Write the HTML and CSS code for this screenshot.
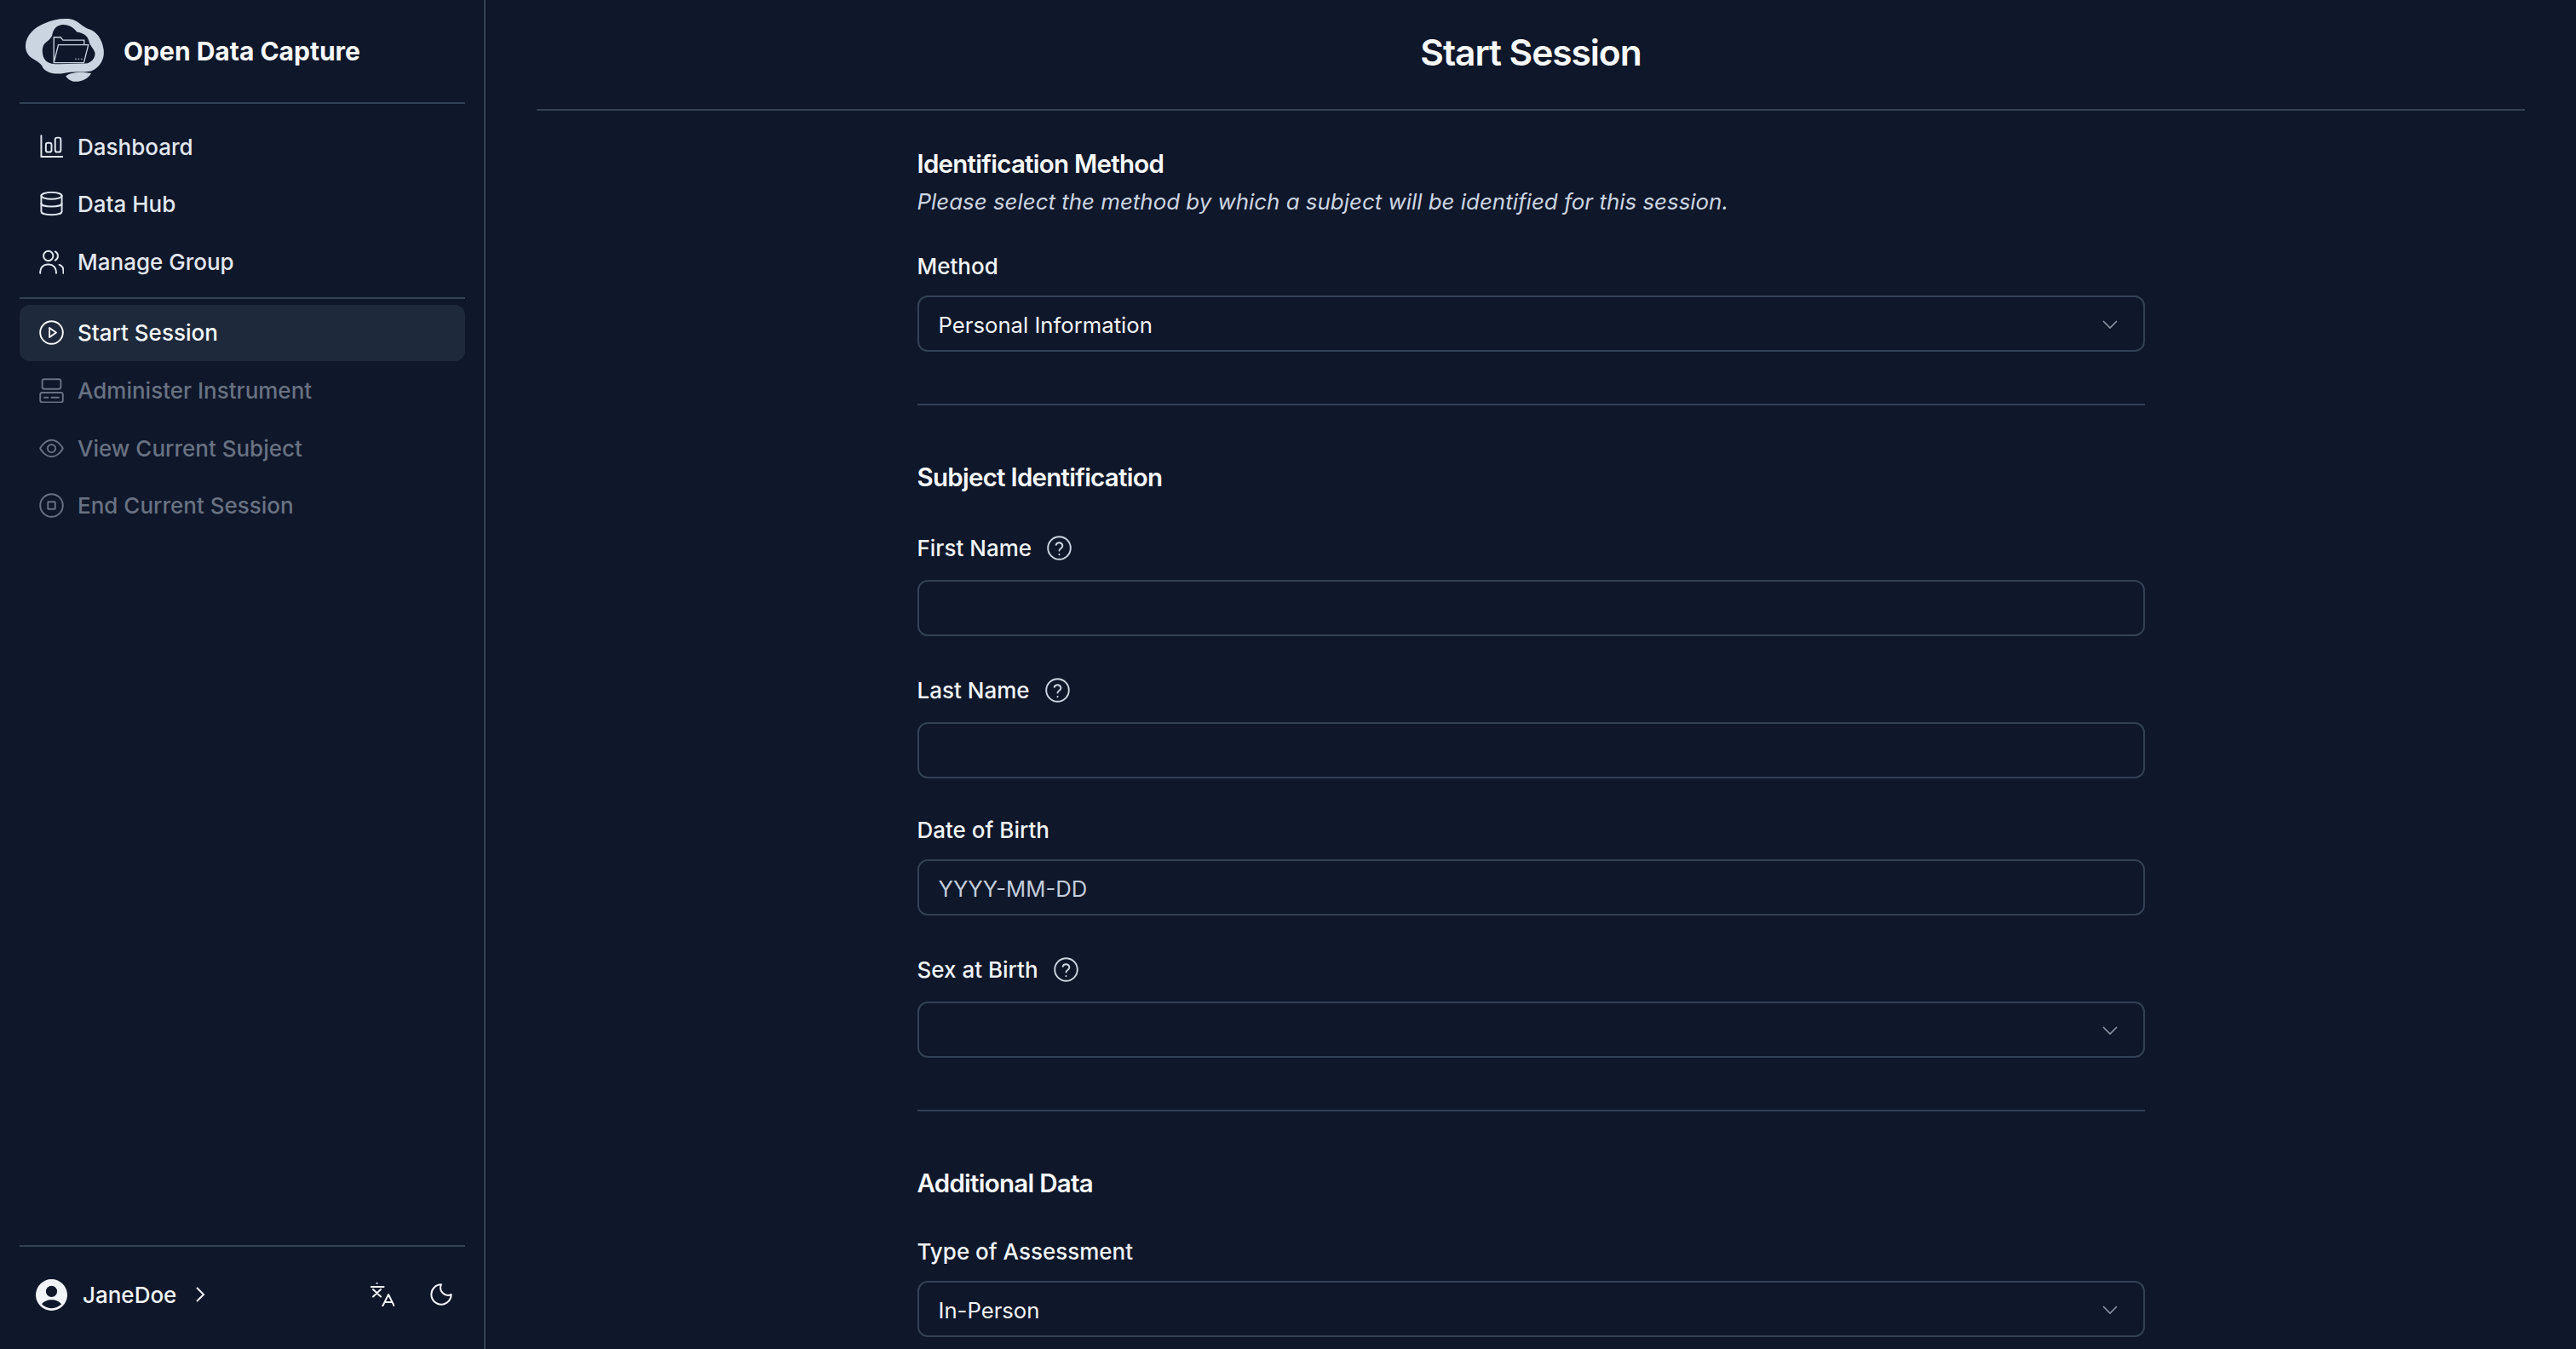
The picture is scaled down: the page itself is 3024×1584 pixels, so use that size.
FILE: index.html
```html
<!DOCTYPE html>
<html lang="en">
<head>
  <meta charset="UTF-8" />
  <title>Open Data Capture</title>
  <link rel="stylesheet" href="styles.css">
</head>
<body>
  <div class="app">
    <aside class="sidebar">
      <div class="brand">
        <svg class="brand-logo" viewBox="30 38 280 228">
          <path class="logo-fill" fill-rule="evenodd" d="M30 135C32 100 60 72 95 58C125 44 160 38 190 42C215 46 230 68 250 76C280 84 300 110 306 150C310 180 296 210 262 226C230 232 200 226 165 233C135 238 105 232 92 215C88 200 70 190 50 178C36 168 29 152 30 135ZM125 95C122 112 108 118 96 130C86 145 88 175 100 187C112 200 130 201 150 201L245 199C265 195 278 178 275 160C270 145 256 135 254 120C250 100 232 90 212 88C200 72 182 60 160 62C140 64 128 78 125 95Z"/>
          <path class="logo-fill" d="M172 243C185 232 215 226 262 233C255 248 235 262 205 263C190 262 178 254 172 243Z"/>
          <path class="logo-line" d="M130 196V106H154L162 116H237V132M130 196L146 133H252L236 196Z"/>
          <path class="logo-dots" d="M206 183h3M216 183h3M227 183h3"/>
        </svg>
        <span class="brand-name">Open Data Capture</span>
      </div>
      <hr class="rule">
      <nav class="nav nav-top">
        <a class="nav-item">
          <svg class="icon" viewBox="0 0 24 24"><path d="M2 1v20.500h20.500"/><rect x="6.500" y="8" width="5.500" height="9" rx="2"/><rect x="15.500" y="3" width="5.500" height="14" rx="2"/></svg>
          Dashboard
        </a>
        <a class="nav-item">
          <svg class="icon" viewBox="0 0 24 24"><ellipse cx="12" cy="4" rx="10" ry="3.300"/><path d="M2 4v15.500c0 1.800 4.500 3 10 3s10-1.200 10-3V4"/><path d="M2 11.500c0 1.800 4.500 3 10 3s10-1.200 10-3"/></svg>
          Data Hub
        </a>
        <a class="nav-item">
          <svg class="icon" viewBox="0 0 24 24"><circle cx="8.900" cy="6.200" r="4.700"/><path d="M1 23v-1.500a7 7 0 0 1 7-7h1.500a7 7 0 0 1 7 7V23"/><path d="M15.500 2a4.700 4.700 0 0 1 0 8.500"/><path d="M19.500 14.800a6 6 0 0 1 4 5.700V23"/></svg>
          Manage Group
        </a>
      </nav>
      <hr class="rule rule-mid">
      <nav class="nav">
        <a class="nav-item nav-item-active">
          <svg class="icon" viewBox="0 0 24 24"><circle cx="12" cy="12" r="11"/><path d="M10 7.500l6.500 4.500-6.500 4.500z"/></svg>
          Start Session
        </a>
        <a class="nav-item nav-item-off">
          <svg class="icon" viewBox="0 0 24 24"><rect x="3" y="1" width="18" height="9.500" rx="2"/><rect x="1" y="14" width="22" height="9.500" rx="2"/><path d="M5 18.800h3.500M12 18.800h7"/></svg>
          Administer Instrument
        </a>
        <a class="nav-item nav-item-off">
          <svg class="icon" viewBox="0 0 24 24"><path d="M1 12s4-8 11-8 11 8 11 8-4 8-11 8-11-8-11-8z"/><circle cx="12" cy="12" r="3.800"/></svg>
          View Current Subject
        </a>
        <a class="nav-item nav-item-off">
          <svg class="icon" viewBox="0 0 24 24"><circle cx="12" cy="12" r="11"/><rect x="8.500" y="8.500" width="7" height="7" rx="0.500"/></svg>
          End Current Session
        </a>
      </nav>
      <div class="sidebar-foot">
        <hr class="rule">
        <div class="user-bar">
          <svg class="avatar" viewBox="0 0 24 24"><path fill-rule="evenodd" d="M12 0a12 12 0 1 0 0 24a12 12 0 0 0 0-24zM12 5a4.300 4.300 0 1 1 0 8.600a4.300 4.300 0 0 1 0-8.600zM4.500 19c1.500-2 4.300-3.300 7.500-3.300s6 1.300 7.500 3.300c-1.900 2-4.500 3.200-7.500 3.200s-5.600-1.200-7.500-3.200z"/></svg>
          <span class="user-name">JaneDoe</span>
          <svg class="user-chevron" viewBox="0 0 12 18"><path d="M2 1l8 8-8 8"/></svg>
          <svg class="foot-icon foot-lang" viewBox="0 0 28 28"><path d="M0.500 5h15M7.500 0.500v.2M3 8l9 8.500M12 8l-9 8.500"/><path d="M14 28l7-14 7 14M16.500 23h9"/></svg>
          <svg class="foot-icon foot-moon" viewBox="0 0 24 24"><path d="M12 2a7.500 7.500 0 0 0 10 10 10 10 0 1 1-10-10z"/></svg>
        </div>
      </div>
    </aside>

    <main class="main">
      <header class="page-head">
        <h1>Start Session</h1>
      </header>
      <form class="form">
        <section class="form-section">
          <h2>Identification Method</h2>
          <p class="hint">Please select the method by which a subject will be identified for this session.</p>
          <div class="field">
            <label>Method</label>
            <div class="box">Personal Information
              <svg class="chevron" viewBox="0 0 18 10"><path d="M1 1l8 8 8-8"/></svg>
            </div>
          </div>
        </section>
        <hr class="rule form-rule">
        <section class="form-section">
          <h2>Subject Identification</h2>
          <div class="field">
            <label class="label-help">First Name
              <svg class="help" viewBox="0 0 24 24"><circle cx="12" cy="12" r="11"/><path d="M8.800 9a3.300 3.300 0 0 1 6.400 1c0 2.200-3.200 2.700-3.200 4.500"/><path d="M12 18.200v.2"/></svg>
            </label>
            <div class="box"></div>
          </div>
          <div class="field">
            <label class="label-help">Last Name
              <svg class="help" viewBox="0 0 24 24"><circle cx="12" cy="12" r="11"/><path d="M8.800 9a3.300 3.300 0 0 1 6.400 1c0 2.200-3.200 2.700-3.200 4.500"/><path d="M12 18.200v.2"/></svg>
            </label>
            <div class="box"></div>
          </div>
          <div class="field">
            <label>Date of Birth</label>
            <div class="box box-placeholder">YYYY-MM-DD</div>
          </div>
          <div class="field">
            <label class="label-help">Sex at Birth
              <svg class="help" viewBox="0 0 24 24"><circle cx="12" cy="12" r="11"/><path d="M8.800 9a3.300 3.300 0 0 1 6.400 1c0 2.200-3.200 2.700-3.200 4.500"/><path d="M12 18.200v.2"/></svg>
            </label>
            <div class="box">
              <svg class="chevron" viewBox="0 0 18 10"><path d="M1 1l8 8 8-8"/></svg>
            </div>
          </div>
        </section>
        <hr class="rule form-rule">
        <section class="form-section">
          <h2>Additional Data</h2>
          <div class="field">
            <label>Type of Assessment</label>
            <div class="box">In-Person
              <svg class="chevron" viewBox="0 0 18 10"><path d="M1 1l8 8 8-8"/></svg>
            </div>
          </div>
        </section>
      </form>
    </main>
  </div>
</body>
</html>
```

FILE: styles.css
```css
* {
  box-sizing: border-box;
}

body {
  margin: 0;
  background: #0f172a;
  color: #f1f5f9;
  font-family: Inter, "Noto Sans", sans-serif;
  font-size: 26px;
}

.app {
  display: flex;
  height: 100vh;
  overflow: hidden;
}

.sidebar {
  display: flex;
  flex-direction: column;
  flex: 0 0 570px;
  padding: 0 22px 0 23px;
  border-right: 2px solid #334155;
}

.brand {
  display: flex;
  align-items: center;
  gap: 22px;
  height: 120px;
  padding-left: 7px;
}

.brand-logo {
  width: 93px;
  height: 76px;
  margin-bottom: 3px;
}

.logo-fill {
  fill: #cbd5e1;
}

.logo-line {
  fill: none;
  stroke: #cbd5e1;
  stroke-width: 4;
}

.logo-dots {
  fill: none;
  stroke: #cbd5e1;
  stroke-width: 5;
}

.brand-name {
  font-size: 30px;
  font-weight: 650;
  color: #f8fafc;
}

.rule {
  width: 100%;
  height: 2px;
  margin: 0;
  border: 0;
  background: #334155;
}

.rule-mid {
  margin: 8px 0 7px;
}

.nav {
  display: flex;
  flex-direction: column;
  gap: 1.800px;
}

.nav-top {
  padding-top: 17px;
}

.nav-item {
  display: flex;
  align-items: center;
  gap: 16px;
  height: 66px;
  padding-left: 23px;
  border-radius: 12px;
  color: #e2e8f0;
  font-weight: 550;
}

.nav-item-active {
  background: #1e293b;
  color: #f8fafc;
}

.nav-item-off {
  color: #687282;
}

.icon {
  flex: none;
  width: 29px;
  height: 29px;
  fill: none;
  stroke: currentColor;
  stroke-width: 1.600;
  stroke-linecap: round;
  stroke-linejoin: round;
}

.sidebar-foot {
  margin-top: auto;
  padding-bottom: 8px;
}

.user-bar {
  display: flex;
  align-items: center;
  height: 112px;
  padding-left: 19px;
}

.avatar {
  width: 37px;
  height: 37px;
  fill: #f1f5f9;
}

.user-name {
  margin-left: 18px;
  font-weight: 550;
}

.user-chevron {
  width: 12px;
  height: 18px;
  margin-left: 22px;
  fill: none;
  stroke: #f1f5f9;
  stroke-width: 2;
}

.foot-icon {
  fill: none;
  stroke: #f1f5f9;
  stroke-width: 2;
  stroke-linecap: round;
  stroke-linejoin: round;
}

.foot-lang {
  width: 28px;
  height: 28px;
  margin-left: auto;
}

.foot-moon {
  width: 28px;
  height: 28px;
  margin-left: 41px;
  margin-right: 14px;
  stroke-width: 1.700;
}

.main {
  flex: 1;
  min-width: 0;
  padding: 0 60px;
}

.page-head {
  display: flex;
  align-items: center;
  justify-content: center;
  height: 130px;
  padding-bottom: 6px;
  border-bottom: 2px solid #334155;
}

h1 {
  margin: 0;
  font-size: 42.500px;
  font-weight: 600;
  letter-spacing: -0.025em;
  color: #f8fafc;
}

.form {
  width: 1441px;
  margin: 0 auto;
  padding-top: 42px;
}

h2 {
  margin: 0;
  font-size: 29.500px;
  line-height: 40px;
  font-weight: 600;
  letter-spacing: -0.025em;
  color: #f8fafc;
}

.hint {
  margin: 10px 0 0;
  font-size: 25.900px;
  line-height: 30px;
  font-style: italic;
  color: #cbd5e1;
}

.field {
  margin-top: 41px;
}

label {
  display: flex;
  align-items: center;
  height: 38px;
  margin-bottom: 16px;
  font-weight: 550;
  color: #f1f5f9;
}

.label-help {
  height: 44px;
  gap: 18px;
}

.help {
  width: 29px;
  height: 29px;
  fill: none;
  stroke: #cbd5e1;
  stroke-width: 1.600;
  stroke-linecap: round;
  stroke-linejoin: round;
}

.box {
  display: flex;
  align-items: center;
  justify-content: space-between;
  height: 66px;
  padding: 2px 30px 0 23px;
  border: 2px solid #334155;
  border-radius: 12px;
  font-size: 25.700px;
  color: #f1f5f9;
}

.box-placeholder {
  color: #c3cddb;
}

.chevron {
  width: 18px;
  height: 10px;
  margin-left: auto;
  fill: none;
  stroke: #8a93a2;
  stroke-width: 1.700;
}

.form-rule {
  margin: 61px 0 64px;
}
```
